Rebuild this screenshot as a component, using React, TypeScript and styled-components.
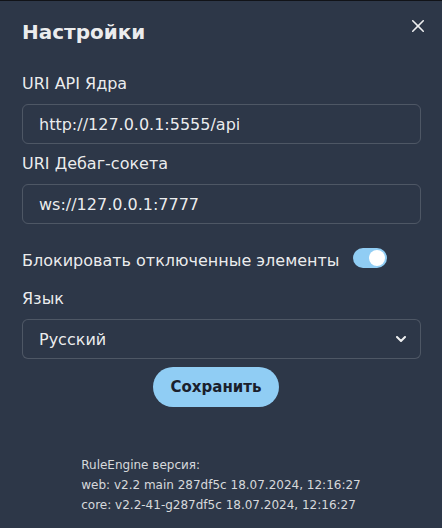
import * as React from "react";
import styled, { createGlobalStyle } from "styled-components";

const GlobalStyle = createGlobalStyle`
  html, body {
    margin: 0;
    padding: 0;
    background: #111318;
  }
  body {
    font-family: "DejaVu Sans", "Noto Sans", sans-serif;
  }
  * {
    box-sizing: border-box;
  }
`;

const Modal = styled.section`
  position: relative;
  margin-top: 1px;
  min-height: 527px;
  background: #2d3748;
  color: rgba(255, 255, 255, 0.92);
`;

const Header = styled.header`
  padding: 19px 22px 16px;
`;

const Title = styled.h2`
  margin: 0;
  font-size: 20px;
  line-height: 24px;
  font-weight: 700;
`;

const CloseButton = styled.button`
  position: absolute;
  top: 9px;
  right: 8px;
  width: 32px;
  height: 32px;
  display: flex;
  align-items: center;
  justify-content: center;
  padding: 0;
  border: none;
  border-radius: 6px;
  background: transparent;
  color: rgba(255, 255, 255, 0.92);
  cursor: pointer;
`;

const Body = styled.div`
  padding: 12px 21px 0 22px;
`;

const Field = styled.div<{ $gap?: number }>`
  margin-top: ${(p) => p.$gap ?? 0}px;
`;

const Label = styled.label`
  display: block;
  margin-bottom: 8px;
  font-size: 16px;
  line-height: 24px;
`;

const TextInput = styled.input`
  display: block;
  width: 100%;
  height: 40px;
  padding: 0 16px;
  border: 1px solid rgba(255, 255, 255, 0.16);
  border-radius: 6px;
  background: transparent;
  color: rgba(255, 255, 255, 0.92);
  font-family: inherit;
  font-size: 16px;
  outline: none;
`;

const SwitchRow = styled.div`
  margin-top: 25px;
  display: flex;
  align-items: flex-start;
  gap: 13px;
  font-size: 16px;
  line-height: 24px;
`;

const Track = styled.span<{ $on: boolean }>`
  margin-top: -1px;
  width: 34px;
  height: 20px;
  padding: 2px;
  border-radius: 9999px;
  display: flex;
  justify-content: ${(p) => (p.$on ? "flex-end" : "flex-start")};
  background: ${(p) => (p.$on ? "#90cdf4" : "rgba(255,255,255,0.24)")};
  cursor: pointer;
`;

const Thumb = styled.span`
  width: 16px;
  height: 16px;
  border-radius: 50%;
  background: #ffffff;
`;

const SelectWrap = styled.div`
  position: relative;
`;

const Select = styled.select`
  display: block;
  width: 100%;
  height: 40px;
  padding: 0 40px 0 16px;
  appearance: none;
  border: 1px solid rgba(255, 255, 255, 0.16);
  border-radius: 6px;
  background: #2d3748;
  color: rgba(255, 255, 255, 0.92);
  font-family: inherit;
  font-size: 16px;
  outline: none;
`;

const SelectIcon = styled.span`
  position: absolute;
  top: 0;
  right: 15px;
  height: 100%;
  display: flex;
  align-items: center;
  pointer-events: none;
`;

const Actions = styled.div`
  margin-top: 8px;
  padding-right: 11px;
  display: flex;
  justify-content: center;
`;

const SaveButton = styled.button`
  height: 40px;
  padding: 0 18px;
  border: none;
  border-radius: 9999px;
  background: #90cdf4;
  color: #1a202c;
  font-family: inherit;
  font-size: 15px;
  font-weight: 700;
  cursor: pointer;
`;

const Version = styled.footer`
  margin-top: 48px;
  display: flex;
  justify-content: center;
  font-size: 12px;
  line-height: 20px;
  color: rgba(255, 255, 255, 0.82);
`;

export default function App() {
  const [apiUri, setApiUri] = React.useState("http://127.0.0.1:5555/api");
  const [debugUri, setDebugUri] = React.useState("ws://127.0.0.1:7777");
  const [blockDisabled, setBlockDisabled] = React.useState(true);
  const [lang, setLang] = React.useState("ru");

  return (
    <>
      <GlobalStyle />
      <Modal>
        <Header>
          <Title>Настройки</Title>
        </Header>
        <CloseButton aria-label="Закрыть">
          <svg width="12" height="12" viewBox="0 0 24 24" fill="currentColor">
            <path d="M.439,21.44a1.5,1.5,0,0,0,2.122,2.121L11.823,14.3a.25.25,0,0,1,.354,0l9.262,9.263a1.5,1.5,0,1,0,2.122-2.121L14.3,12.177a.25.25,0,0,1,0-.354l9.263-9.262A1.5,1.5,0,0,0,21.439.44L12.177,9.7a.25.25,0,0,1-.354,0L2.561.44A1.5,1.5,0,0,0,.439,2.561L9.7,11.823a.25.25,0,0,1,0,.354Z" />
          </svg>
        </CloseButton>
        <Body>
          <Field>
            <Label htmlFor="api-uri">URI API Ядра</Label>
            <TextInput id="api-uri" value={apiUri} onChange={(e) => setApiUri(e.target.value)} />
          </Field>
          <Field $gap={8}>
            <Label htmlFor="debug-uri">URI Дебаг-сокета</Label>
            <TextInput id="debug-uri" value={debugUri} onChange={(e) => setDebugUri(e.target.value)} />
          </Field>
          <SwitchRow>
            <span>Блокировать отключенные элементы</span>
            <Track $on={blockDisabled} onClick={() => setBlockDisabled(!blockDisabled)}>
              <Thumb />
            </Track>
          </SwitchRow>
          <Field $gap={14}>
            <Label htmlFor="lang">Язык</Label>
            <SelectWrap>
              <Select id="lang" value={lang} onChange={(e) => setLang(e.target.value)}>
                <option value="ru">Русский</option>
                <option value="en">English</option>
              </Select>
              <SelectIcon>
                <svg width="10" height="6" viewBox="0 0 10 6" fill="none">
                  <path d="M1 1l4 4 4-4" stroke="rgba(255,255,255,0.92)" strokeWidth="2" strokeLinecap="round" strokeLinejoin="round" />
                </svg>
              </SelectIcon>
            </SelectWrap>
          </Field>
          <Actions>
            <SaveButton>Сохранить</SaveButton>
          </Actions>
        </Body>
        <Version>
          <div>
            <div>RuleEngine версия:</div>
            <div>web: v2.2 main 287df5c 18.07.2024, 12:16:27</div>
            <div>core: v2.2-41-g287df5c 18.07.2024, 12:16:27</div>
          </div>
        </Version>
      </Modal>
    </>
  );
}
